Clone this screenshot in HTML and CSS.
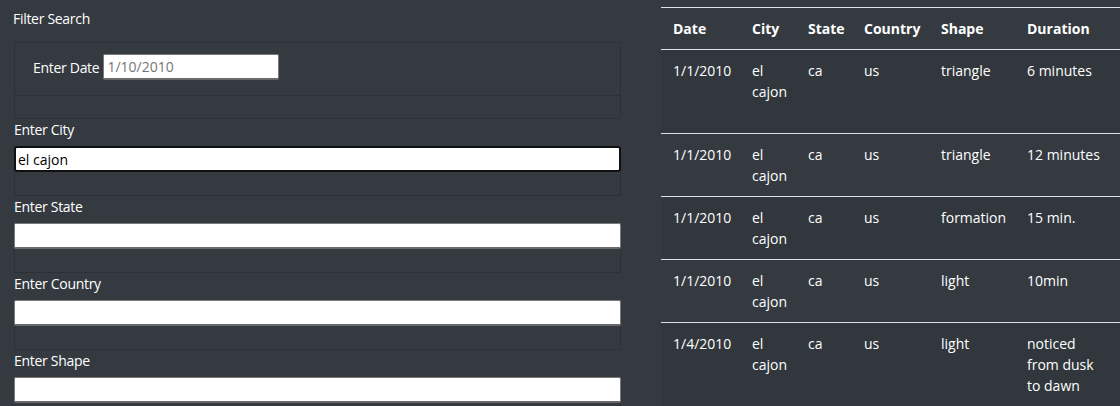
FILE: index.html
```html
<!DOCTYPE html>
<html lang="en">
<head>
<meta charset="utf-8">
<title>UFO Sightings</title>
<link rel="stylesheet" href="styles.css">
</head>
<body>
<div class="page">
  <section class="filters">
    <div class="title">Filter Search</div>
    <ul class="group">
      <li class="item date-item">
        <label class="date-label" for="date">Enter Date</label>
        <input id="date" class="date-input" type="text" placeholder="1/10/2010">
      </li>
      <li class="item empty-item"></li>
    </ul>
    <div class="field">
      <label class="field-label" for="city">Enter City</label>
      <input id="city" class="text-input focused" type="text" value="el cajon">
      <div class="empty-box"></div>
    </div>
    <div class="field">
      <label class="field-label" for="state">Enter State</label>
      <input id="state" class="text-input" type="text">
      <div class="empty-box"></div>
    </div>
    <div class="field">
      <label class="field-label" for="country">Enter Country</label>
      <input id="country" class="text-input" type="text">
      <div class="empty-box"></div>
    </div>
    <div class="field">
      <label class="field-label" for="shape">Enter Shape</label>
      <input id="shape" class="text-input" type="text">
      <div class="empty-box"></div>
    </div>
  </section>
  <section class="results">
    <table class="data">
      <colgroup>
        <col class="c-date"><col class="c-city"><col class="c-state"><col class="c-country"><col class="c-shape"><col class="c-duration">
      </colgroup>
      <thead>
        <tr><th>Date</th><th>City</th><th>State</th><th>Country</th><th>Shape</th><th>Duration</th></tr>
      </thead>
      <tbody>
        <tr class="tall"><td>1/1/2010</td><td>el cajon</td><td>ca</td><td>us</td><td>triangle</td><td>6 minutes</td></tr>
        <tr><td>1/1/2010</td><td>el cajon</td><td>ca</td><td>us</td><td>triangle</td><td>12 minutes</td></tr>
        <tr><td>1/1/2010</td><td>el cajon</td><td>ca</td><td>us</td><td>formation</td><td>15 min.</td></tr>
        <tr><td>1/1/2010</td><td>el cajon</td><td>ca</td><td>us</td><td>light</td><td>10min</td></tr>
        <tr><td>1/4/2010</td><td>el cajon</td><td>ca</td><td>us</td><td>light</td><td>noticed from dusk to dawn</td></tr>
      </tbody>
    </table>
  </section>
</div>
</body>
</html>
```
FILE: styles.css
```css
html, body {
  margin: 0;
  padding: 0;
  overflow: hidden;
}
body {
  background: #343a40;
  color: #ffffff;
  font-family: "Open Sans", "Noto Sans", sans-serif;
  font-size: 14px;
  line-height: 21px;
  width: 1120px;
  height: 406px;
}
.page {
  display: flex;
  gap: 40px;
  align-items: flex-start;
}
.filters {
  width: 607px;
  margin-left: 14px;
  padding-top: 8px;
}
.title {
  margin-left: -1px;
  margin-bottom: 13px;
  letter-spacing: -0.3px;
}
.group {
  list-style: none;
  margin: 0;
  padding: 0;
  border: 1px solid rgba(0, 0, 0, 0.14);
}
.item + .item {
  border-top: 1px solid rgba(0, 0, 0, 0.14);
}
.date-item {
  display: flex;
  align-items: center;
  gap: 4px;
  padding: 11px 18px 15px;
}
.date-label {
  letter-spacing: -0.3px;
}
.empty-item {
  height: 22px;
}
input {
  font-family: "Open Sans", "Noto Sans", sans-serif;
  font-size: 14px;
  box-sizing: border-box;
  background: #ffffff;
  color: #000000;
  margin: 0;
  border: 1px solid #7a7a7a;
  border-bottom: 2px solid #6a6a6a;
  border-radius: 2px;
  padding: 0 3px;
  outline: none;
}
input::placeholder {
  color: #757575;
}
.date-input {
  width: 176px;
  height: 26px;
}
.field {
  display: flex;
  flex-direction: column;
}
.field-label {
  margin-bottom: 6px;
  letter-spacing: -0.3px;
}
.text-input {
  width: 607px;
  height: 26px;
}
.text-input.focused {
  border: 2px solid #101010;
  border-radius: 3px;
  padding: 0 2px;
}
.empty-box {
  height: 24px;
  box-sizing: border-box;
  border: 1px solid rgba(0, 0, 0, 0.14);
  border-top: none;
}
.results {
  flex: 1;
  padding-top: 7px;
  overflow: hidden;
}
.data {
  width: 459px;
  border-collapse: collapse;
  table-layout: fixed;
}
.c-date { width: 79px; }
.c-city { width: 56px; }
.c-state { width: 56px; }
.c-country { width: 77px; }
.c-shape { width: 86px; }
.data th,
.data td {
  text-align: left;
  vertical-align: top;
  padding: 10px 8px 10px 12px;
  border-top: 1px solid #dee2e6;
}
.data th {
  font-weight: 700;
  border-bottom: 1px solid #dee2e6;
}
.data td:last-child,
.data th:last-child {
  padding-right: 18px;
}
.data tbody tr:nth-child(odd) {
  background: rgba(0, 0, 0, 0.05);
}
.data tr.tall td {
  padding-bottom: 31px;
}
```
